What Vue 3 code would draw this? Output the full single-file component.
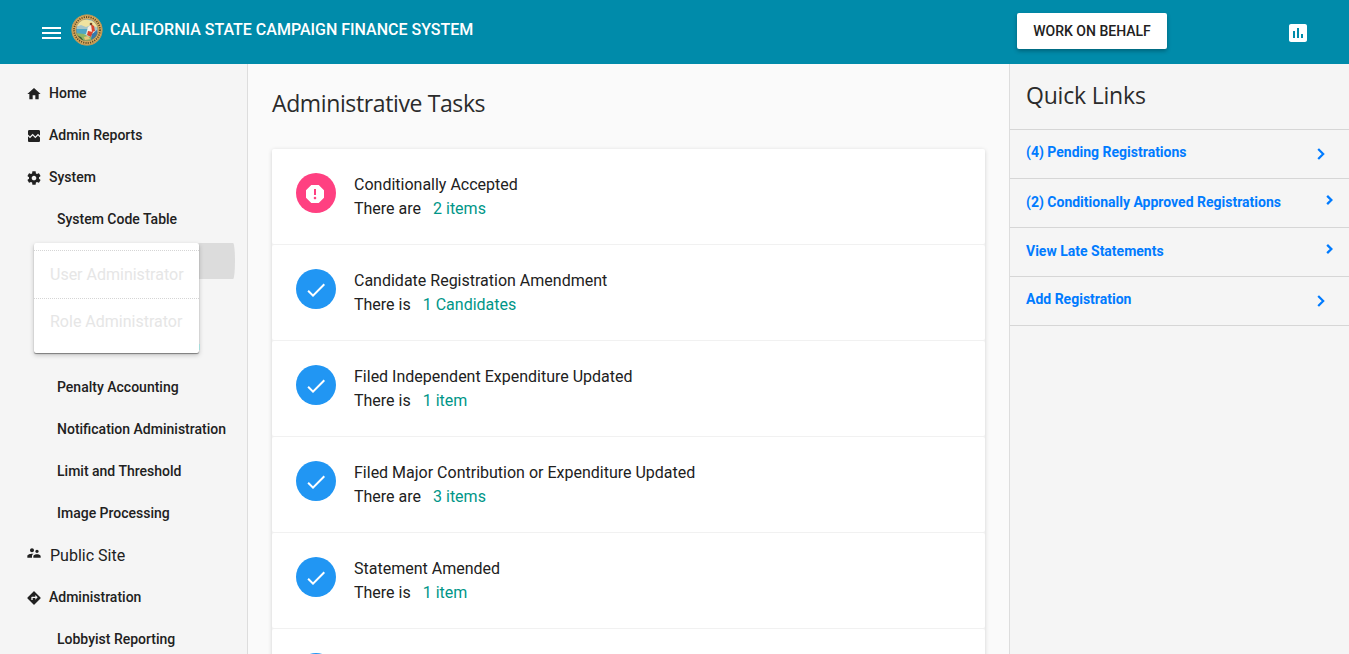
<script setup>
const paths = {
  home: 'M10 20v-6h4v6h5v-8h3L12 3 2 12h3v8z',
  report: 'M21 5v6.59l-3-3.01-4 4.01-4-4-4 4-3-3.01V5c0-1.1.9-2 2-2h14c1.1 0 2 .9 2 2zm-3 6.42l3 3.01V19c0 1.1-.9 2-2 2H5c-1.1 0-2-.9-2-2v-6.58l3 2.99 4-4 4 4 4-3.99z',
  gear: 'M19.43 12.98c.04-.32.07-.64.07-.98s-.03-.66-.07-.98l2.11-1.65c.19-.15.24-.42.12-.64l-2-3.46c-.12-.22-.39-.3-.61-.22l-2.49 1c-.52-.4-1.08-.73-1.69-.98l-.38-2.65C14.46 2.18 14.25 2 14 2h-4c-.25 0-.46.18-.49.42l-.38 2.65c-.61.25-1.17.59-1.69.98l-2.49-1c-.23-.09-.49 0-.61.22l-2 3.46c-.13.22-.07.49.12.64l2.11 1.65c-.04.32-.07.65-.07.98s.03.66.07.98l-2.11 1.65c-.19.15-.24.42-.12.64l2 3.46c.12.22.39.3.61.22l2.49-1c.52.4 1.08.73 1.69.98l.38 2.65c.03.24.24.42.49.42h4c.25 0 .46-.18.49-.42l.38-2.65c.61-.25 1.17-.59 1.69-.98l2.49 1c.23.09.49 0 .61-.22l2-3.46c.12-.22.07-.49-.12-.64l-2.11-1.65zM12 15.5c-1.93 0-3.5-1.57-3.5-3.5s1.57-3.5 3.5-3.5 3.5 1.57 3.5 3.5-1.57 3.5-3.5 3.5z',
  people: 'M16.5 12c1.38 0 2.49-1.12 2.49-2.5S17.88 7 16.5 7C15.12 7 14 8.12 14 9.5s1.12 2.5 2.5 2.5zM9 11c1.66 0 2.99-1.34 2.99-3S10.66 5 9 5C7.34 5 6 6.34 6 8s1.34 3 3 3zm7.5 3c-1.83 0-5.5.92-5.5 2.75V19h11v-2.25c0-1.83-3.67-2.75-5.5-2.75zM9 13c-2.33 0-7 1.17-7 3.5V19h7v-2.25c0-.85.33-2.34 2.37-3.47C10.5 13.1 9.66 13 9 13z',
  directions: 'M21.71 11.29l-9-9c-.39-.39-1.02-.39-1.41 0l-9 9c-.39.39-.39 1.02 0 1.41l9 9c.39.39 1.02.39 1.41 0l9-9c.39-.38.39-1.01 0-1.41zM14 14.5V12h-4v3H8v-4c0-.55.45-1 1-1h5V7.5l3.5 3.5-3.5 3.5z',
  check: 'M9 16.17L4.83 12l-1.42 1.41L9 19 21 7l-1.41-1.41z',
  alert: 'M15.73 3H8.27L3 8.27v7.46L8.27 21h7.46L21 15.73V8.27L15.73 3zM12 17.3c-.72 0-1.3-.58-1.3-1.3s.58-1.3 1.3-1.3 1.3.58 1.3 1.3-.58 1.3-1.3 1.3zm1-4.3h-2V7h2v6z',
  chart: 'M19 3H5c-1.1 0-2 .9-2 2v14c0 1.1.9 2 2 2h14c1.1 0 2-.9 2-2V5c0-1.1-.9-2-2-2zM9 17H7v-7h2v7zm4 0h-2V7h2v10zm4 0h-2v-4h2v4z',
}
const topNav = [
  { label: 'Home', icon: 'home' },
  { label: 'Admin Reports', icon: 'report' },
  { label: 'System', icon: 'gear' },
  { label: 'System Code Table' },
]
const bottomNav = [
  { label: 'Penalty Accounting' },
  { label: 'Notification Administration' },
  { label: 'Limit and Threshold' },
  { label: 'Image Processing' },
  { label: 'Public Site', icon: 'people', plain: true },
  { label: 'Administration', icon: 'directions' },
  { label: 'Lobbyist Reporting' },
]
const tasks = [
  { title: 'Conditionally Accepted', verb: 'There are', link: '2 items', alert: true },
  { title: 'Candidate Registration Amendment', verb: 'There is', link: '1 Candidates' },
  { title: 'Filed Independent Expenditure Updated', verb: 'There is', link: '1 item' },
  { title: 'Filed Major Contribution or Expenditure Updated', verb: 'There are', link: '3 items' },
  { title: 'Statement Amended', verb: 'There is', link: '1 item' },
  { title: '', verb: '', link: '' },
]
const links = [
  { label: '(4) Pending Registrations' },
  { label: '(2) Conditionally Approved Registrations', small: true },
  { label: 'View Late Statements', small: true },
  { label: 'Add Registration' },
]
</script>

<template>
  <div class="app">
    <header class="bar">
      <svg class="menu" viewBox="0 0 19 12"><path d="M0 0h19v2H0zM0 5h19v2H0zM0 10h19v2H0z" fill="#fff" /></svg>
      <svg class="seal" viewBox="0 0 32 32">
        <defs><clipPath id="seal-core"><circle cx="16" cy="16" r="11" /></clipPath></defs>
        <circle cx="16" cy="16" r="15.5" fill="#d9ad62" />
        <circle cx="16" cy="16" r="15.1" fill="none" stroke="#a98445" stroke-width=".6" />
        <circle cx="16" cy="16" r="13" fill="none" stroke="#5c4824" stroke-width="1.8" stroke-dasharray="1.2 1.1" />
        <g clip-path="url(#seal-core)">
          <path d="M4 4h24v24H4z" fill="#a9d5de" />
          <path d="M4 9l8-4 9 2 7 4v3H4z" fill="#efe3a0" />
          <path d="M4 13l6-2 5 2 5-2 8 3v3H4z" fill="#a5c5c8" />
          <path d="M4 15h18v5H4z" fill="#4fa7c6" />
          <path d="M4 19l9 1 5 3 10-2v8H4z" fill="#8fb563" />
          <path d="M5 21l5 2 3 4-6-1z" fill="#315d3c" />
          <path d="M17 13l3-2 3 4 1 4-6 2-3-1z" fill="#f3eee2" />
          <path d="M20 10l3 2 1 5-3 1zM17 17l5 1-2 5-4-2z" fill="#d9442e" />
          <path d="M21 20l5-4 1 6-7 4z" fill="#3379ac" />
          <circle cx="20" cy="10" r="1.3" fill="#744421" />
          <path d="M13 23l4-1 2 3-5 1z" fill="#e7c579" />
        </g>
        <circle cx="16" cy="16" r="11" fill="none" stroke="#8c6c38" stroke-width=".5" />
      </svg>
      <span class="brand">CALIFORNIA STATE CAMPAIGN FINANCE SYSTEM</span>
      <button class="behalf">WORK ON BEHALF</button>
      <svg class="chart" viewBox="0 0 24 24"><path :d="paths.chart" fill="#fff" /></svg>
    </header>
    <div class="body">
      <nav class="side">
        <div v-for="n in topNav" :key="n.label" class="item" :class="{ sub: !n.icon }">
          <svg v-if="n.icon" viewBox="0 0 24 24" :class="n.icon"><path :d="paths[n.icon]" /></svg>
          <span>{{ n.label }}</span>
        </div>
        <div class="slot">
          <div class="hover"></div>
          <div class="popup">
            <div class="option">User Administrator</div>
            <div class="option second">Role Administrator</div>
          </div>
          <div class="mark"></div>
        </div>
        <div v-for="n in bottomNav" :key="n.label" class="item" :class="{ sub: !n.icon, plain: n.plain }">
          <svg v-if="n.icon" viewBox="0 0 24 24" :class="n.icon"><path :d="paths[n.icon]" /></svg>
          <span>{{ n.label }}</span>
        </div>
      </nav>
      <main class="main">
        <h1 class="heading">Administrative Tasks</h1>
        <div class="list">
          <section v-for="(t, i) in tasks" :key="i" class="card">
            <div class="badge" :class="{ pink: t.alert }">
              <svg viewBox="0 0 24 24"><path :d="t.alert ? paths.alert : paths.check" fill="#fff" /></svg>
            </div>
            <div class="text">
              <div>{{ t.title }}</div>
              <div>{{ t.verb }}<a>{{ t.link }}</a></div>
            </div>
          </section>
        </div>
      </main>
      <aside class="quick">
        <h2 class="heading">Quick Links</h2>
        <div v-for="l in links" :key="l.label" class="link" :class="{ small: l.small }">
          <span>{{ l.label }}</span>
          <svg viewBox="0 0 8 12"><path d="M1.2 1l5 5-5 5" fill="none" stroke="#007bff" :stroke-width="l.small ? 2.8 : 2.2" /></svg>
        </div>
      </aside>
    </div>
  </div>
</template>

<style>
body { overflow: hidden; }
</style>
<style scoped>
.app { height: 654px; overflow: hidden; font-family: Roboto, sans-serif; color: #212121; background: #fafafa; display: flex; flex-direction: column; }
.bar { height: 64px; flex: none; box-sizing: border-box; background: #008baa; display: flex; align-items: flex-start; padding-left: 42px; }
.menu { width: 19px; height: 12px; margin-top: 27px; }
.seal { width: 32px; height: 32px; margin: 14px 0 0 10px; }
.brand { margin: 18px 0 0 7px; font-size: 16px; line-height: 24px; font-weight: 500; color: #fff; white-space: nowrap; }
.behalf { margin: 13px 119px 0 auto; width: 150px; height: 36px; border: 0; border-radius: 2px; padding: 0; background: #fff; color: #212121; font: 500 14px/36px Roboto, sans-serif; box-shadow: 0 2px 4px rgba(0,0,0,.3); flex: none; }
.chart { width: 24px; height: 24px; margin: 21px 39px 0 0; flex: none; }
.body { flex: 1; min-height: 0; display: flex; }
.side { width: 247px; flex: none; background: #f5f5f5; border-right: 1px solid #ddd; padding-top: 8px; }
.item { height: 42px; display: flex; align-items: center; padding-left: 26px; font-size: 14px; font-weight: 500; white-space: nowrap; }
.item svg { width: 16px; height: 16px; margin: 2px 7px 0 0; fill: #212121; }
.item svg.people { margin: -4px 8px 0 0; }
.item.sub { padding-left: 57px; }
.item.plain { font-size: 16px; font-weight: 400; }
.slot { height: 126px; position: relative; }
.hover { position: absolute; left: 190px; top: 3px; width: 45px; height: 36px; background: #dcdcdc; border-radius: 0 2px 2px 0 / 0 18px 18px 0; }
.mark { position: absolute; left: 199px; top: 104px; width: 1px; height: 6px; background: #a5dcda; }
.popup { position: absolute; left: 34px; top: 3px; width: 165px; height: 110px; box-sizing: border-box; padding-top: 7px; background: #fff; border-radius: 2px; box-shadow: 0 1px 1px rgba(0,0,0,.4), 0 2px 5px rgba(0,0,0,.22); }
.option { height: 48px; box-sizing: border-box; padding-left: 16px; border-top: 1px dotted #d5d5d5; font-size: 16px; line-height: 48px; color: #e6e6e6; white-space: nowrap; }
.option.second { line-height: 46px; }
.main { flex: 1; min-width: 0; padding: 0 24px; }
.heading { margin: 0; font: 400 23px/32px "Open Sans", sans-serif; white-space: nowrap; color: #2b2b2b; }
.main .heading { padding: 23px 0 30px; letter-spacing: -.38px; }
.list { width: 713px; background: #f1f1f1; border-radius: 2px; box-shadow: 0 1px 4px rgba(0,0,0,.17); }
.card { height: 95px; box-sizing: border-box; margin-bottom: 1px; padding: 24px; background: #fff; border-radius: 2px; display: flex; }
.badge { width: 40px; height: 40px; flex: none; border-radius: 50%; background: #2196f3; display: flex; align-items: center; justify-content: center; }
.badge svg { width: 24px; height: 24px; margin-top: 2px; }
.badge.pink { background: #ff4081; }
.badge.pink svg { margin: 2px 2px 0 0; }
.text { margin-left: 18px; font-size: 16px; line-height: 24px; white-space: nowrap; }
.text a { margin-left: 12px; color: #009688; }
.quick { width: 339px; flex: none; background: #f5f5f5; border-left: 1px solid #ddd; }
.quick .heading { height: 66px; box-sizing: border-box; padding: 15px 0 0 16px; border-bottom: 1px solid #d6d6d6; letter-spacing: -.2px; }
.link { height: 49px; box-sizing: border-box; border-bottom: 1px solid #d6d6d6; padding: 13px 24px 0 16px; display: flex; justify-content: space-between; align-items: flex-start; color: #007bff; font-size: 14px; line-height: 18px; font-weight: 700; }
.link svg { width: 8px; height: 12px; margin-top: 5px; }
.link.small { padding: 14px 16px 0 16px; }
.link.small svg { width: 7px; height: 10px; margin-top: 2px; }
</style>
